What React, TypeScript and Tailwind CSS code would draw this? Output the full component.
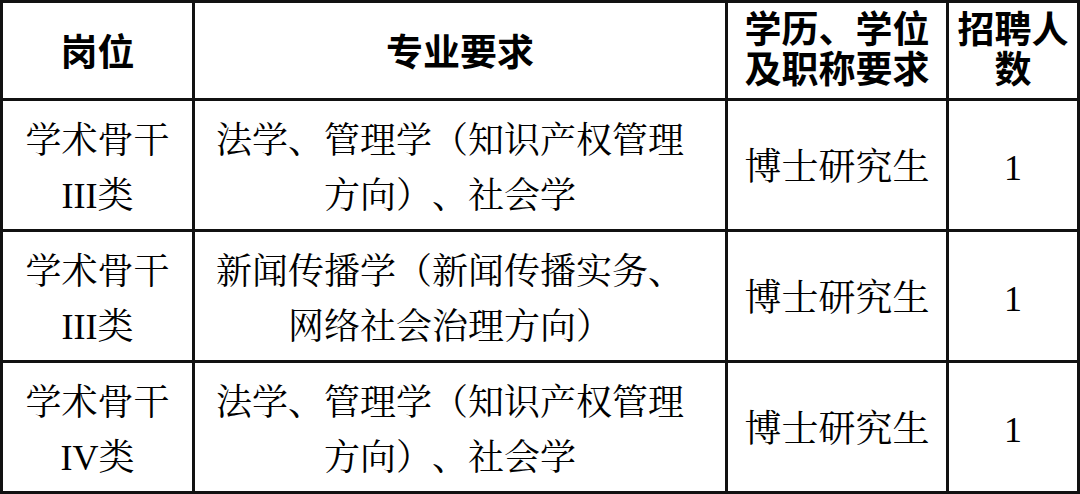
const serif = "font-['Liberation_Serif','Noto_Serif_CJK_SC','Noto_Sans_CJK_SC',serif]";
const sans = "font-['Noto_Sans_CJK_SC','Liberation_Sans',sans-serif]";

const rows = [
  { post: ["学术骨干", "III类"], major: ["法学、管理学（知识产权管理", "方向）、社会学"] },
  { post: ["学术骨干", "III类"], major: ["新闻传播学（新闻传播实务、", "网络社会治理方向）"] },
  { post: ["学术骨干", "IV类"], major: ["法学、管理学（知识产权管理", "方向）、社会学"] },
];

const Lines = ({ lines }: { lines: string[] }) => (
  <>
    {lines.map((l, i) => (
      <span key={i} className="block whitespace-nowrap">{l}</span>
    ))}
  </>
);

const App = () => {
  return (
    <div className="w-[1080px] h-[494px] bg-white [text-spacing-trim:space-all]">
      <div className="grid grid-cols-[189px_530px_218px_128px] grid-rows-[95px_128px_128px_128px] gap-[3px] p-[3px] bg-[#111] h-full text-black">
        <div className={`bg-white flex items-center justify-center text-[37px] font-bold ${sans}`}>岗位</div>
        <div className={`bg-white flex items-center justify-center text-[37px] font-bold ${sans}`}>专业要求</div>
        <div className={`bg-white flex flex-col items-center justify-center pb-[8px] text-[37px] leading-[40px] font-bold ${sans}`}>
          <Lines lines={["学历、学位", "及职称要求"]} />
        </div>
        <div className={`bg-white flex flex-col items-center justify-center pb-[8px] text-[37px] leading-[40px] font-bold ${sans}`}>
          <Lines lines={["招聘人", "数"]} />
        </div>

        {rows.map((r, i) => (
          <div key={i} className="contents">
            <div className={`bg-white flex flex-col items-center justify-center pt-[8px] text-center text-[36px] leading-[55px] ${serif}`}>
              <Lines lines={r.post} />
            </div>
            <div className={`bg-white flex flex-col items-center justify-center pt-[8px] pr-[20px] text-center text-[36px] leading-[55px] ${serif}`}>
              <Lines lines={r.major} />
            </div>
            <div className={`bg-white flex items-center justify-center pt-[6px] text-[37px] ${serif}`}>博士研究生</div>
            <div className={`bg-white flex items-center justify-center pt-[6px] text-[36px] ${serif}`}>1</div>
          </div>
        ))}
      </div>
    </div>
  );
};

export default App;
